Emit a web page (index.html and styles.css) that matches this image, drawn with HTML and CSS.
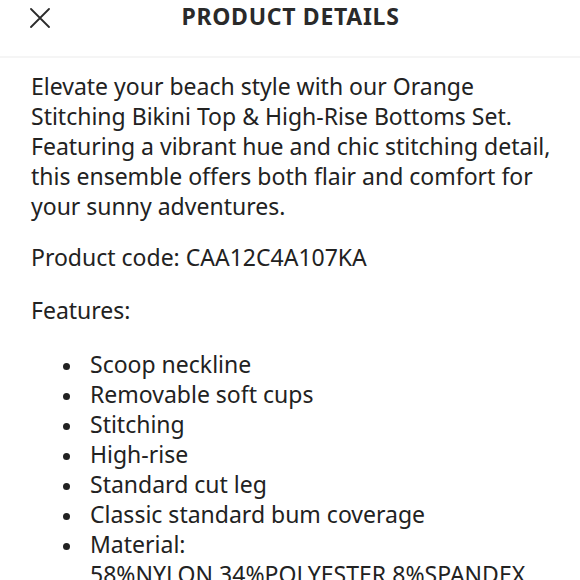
FILE: index.html
```html
<!DOCTYPE html>
<html>
<head>
<meta charset="utf-8">
<link rel="stylesheet" href="styles.css">
</head>
<body>
<header class="topbar">
  <button class="close" aria-label="Close">
    <svg width="20" height="20" viewBox="0 0 20 20"><path d="M1 1 L19 19 M19 1 L1 19" stroke="#2b2b2b" stroke-width="1.8" fill="none" stroke-linecap="round"/></svg>
  </button>
  <h1 class="title">PRODUCT DETAILS</h1>
</header>
<main class="content">
  <p class="para intro">Elevate your beach style with our Orange Stitching Bikini Top &amp; High-Rise Bottoms Set. Featuring a vibrant hue and chic stitching detail, this ensemble offers both flair and comfort for your sunny adventures.</p>
  <p class="para code">Product code: CAA12C4A107KA</p>
  <p class="para feat">Features:</p>
  <ul class="list">
    <li>Scoop neckline</li>
    <li>Removable soft cups</li>
    <li>Stitching</li>
    <li>High-rise</li>
    <li>Standard cut leg</li>
    <li>Classic standard bum coverage</li>
    <li>Material: 58%NYLON,34%POLYESTER,8%SPANDEX</li>
  </ul>
</main>
</body>
</html>
```

FILE: styles.css
```css
html, body {
  margin: 0;
  padding: 0;
  background: #ffffff;
  overflow: hidden;
}
body {
  font-family: "Noto Sans", "Open Sans", sans-serif;
  color: #222222;
  width: 580px;
  height: 580px;
}
.topbar {
  position: relative;
  height: 56px;
  border-bottom: 2px solid #f5f5f5;
  display: flex;
  align-items: flex-start;
  justify-content: center;
}
.close {
  position: absolute;
  left: 30px;
  top: 8px;
  width: 20px;
  height: 20px;
  padding: 0;
  border: 0;
  background: none;
  display: flex;
}
.title {
  margin: 1px 0 0 1px;
  font-size: 23px;
  font-weight: 700;
  line-height: 30px;
  letter-spacing: 0.7px;
  color: #2a2a2a;
}
.content {
  padding: 13px 20px 0 31px;
}
.para {
  margin: 0;
  font-size: 23px;
  line-height: 30px;
}
.intro { margin-bottom: 21px; }
.code { margin-bottom: 23px; }
.feat { margin-bottom: 24px; }
.list {
  margin: 0;
  padding: 0 0 0 32px;
  list-style: none;
  font-size: 23px;
  line-height: 30px;
}
.list li {
  display: grid;
  grid-template-columns: 27px 1fr;
}
.list li::before {
  content: "";
  width: 7px;
  height: 7px;
  margin-top: 14px;
  border-radius: 50%;
  background: #222222;
}
```
